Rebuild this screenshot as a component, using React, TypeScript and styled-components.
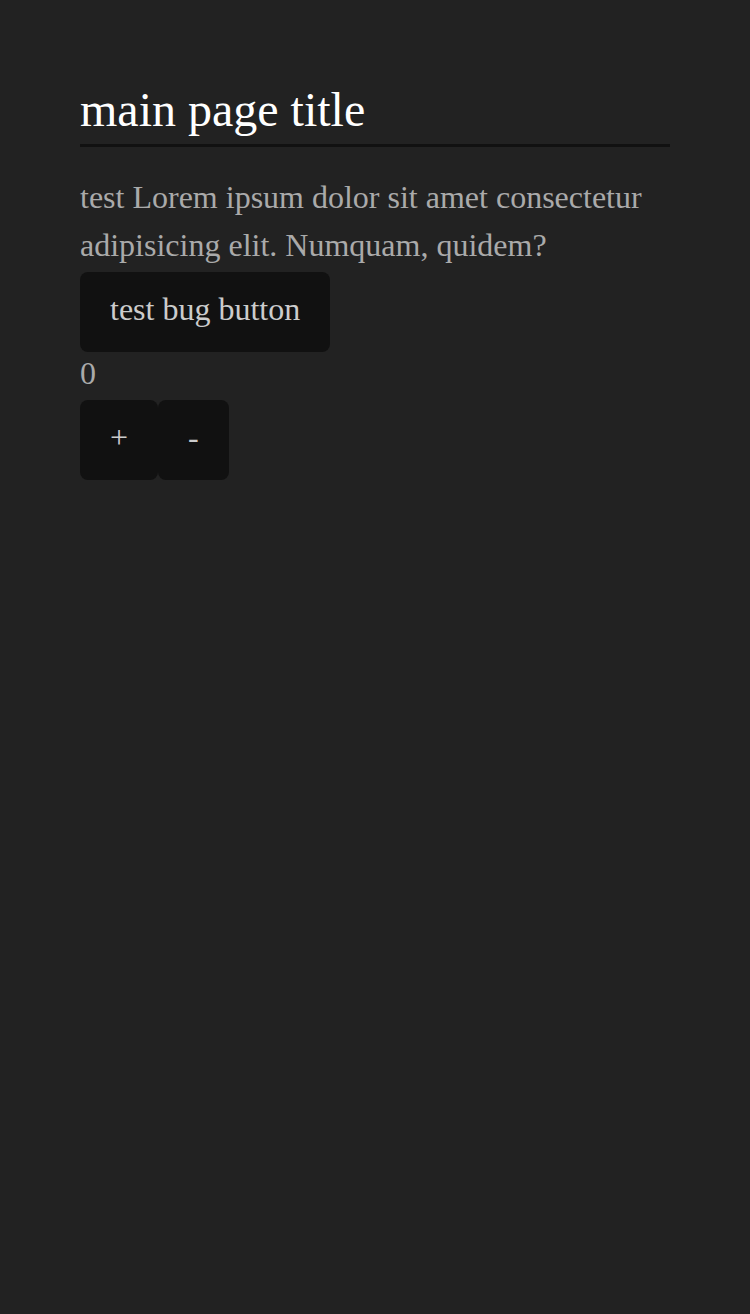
import React, { useState } from "react";
import styled, { createGlobalStyle } from "styled-components";

const GlobalStyle = createGlobalStyle`
  html, body {
    margin: 0;
    padding: 0;
    background-color: #222222;
  }
  body {
    font-family: "Liberation Serif", "Times New Roman", serif;
  }
`;

const Page = styled.main`
  min-height: 1314px;
  box-sizing: border-box;
  padding: 82px 80px;
  display: flex;
  flex-flow: column nowrap;
  align-items: flex-start;
`;

const Title = styled.h1`
  align-self: stretch;
  margin: 0;
  padding-bottom: 7px;
  border-bottom: 3px solid #111111;
  font-size: 48px;
  font-weight: normal;
  color: #ffffff;
`;

const Text = styled.p`
  margin: 26px 0 3px 0;
  font-size: 32px;
  line-height: 48px;
  color: #aaaaaa;
`;

const Count = styled.span`
  font-size: 32px;
  line-height: 42px;
  padding-bottom: 6px;
  color: #aaaaaa;
`;

const Button = styled.button`
  height: 80px;
  padding: 0 30px 5px;
  border: none;
  border-radius: 8px;
  background-color: #111111;
  color: #cccccc;
  font-family: inherit;
  font-size: 32px;
  &:hover {
    cursor: pointer;
  }
`;

const Counter = styled.div`
  display: flex;
  flex-flow: row nowrap;
`;

const App = () => {
  const [count, setCount] = useState(0);

  return (
    <>
      <GlobalStyle />
      <Page>
        <Title>main page title</Title>
        <Text>
          test Lorem ipsum dolor sit amet consectetur adipisicing elit. Numquam, quidem?
        </Text>
        <Button>test bug button</Button>
        <Count>{count}</Count>
        <Counter>
          <Button onClick={() => setCount(count + 1)}>+</Button>
          <Button onClick={() => setCount(count - 1)}>-</Button>
        </Counter>
      </Page>
    </>
  );
};

export default App;
